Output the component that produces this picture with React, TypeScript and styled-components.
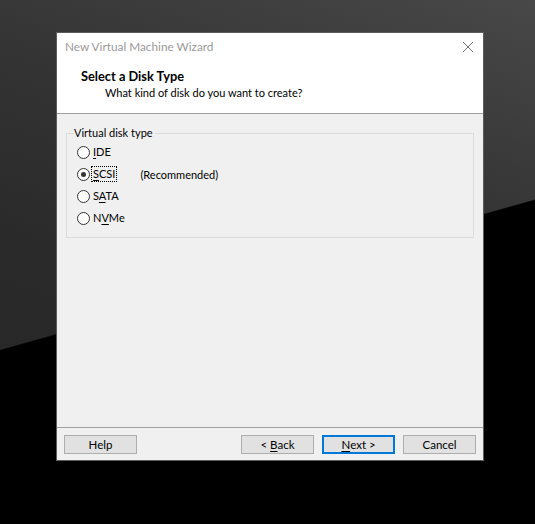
import React from "react";
import styled, { createGlobalStyle } from "styled-components";

const Global = createGlobalStyle`
  html, body { margin: 0; padding: 0; }
  body { font-family: Lato, "Noto Sans", sans-serif; }
`;

const Desktop = styled.div`
  width: 535px;
  height: 524px;
  box-sizing: border-box;
  padding: 32px 0 0 56px;
  overflow: hidden;
  background:
    linear-gradient(164.3deg, transparent 51.8%, #000 52%),
    linear-gradient(200deg, #484848 0%, #333 35%, #2a2a2a 60%, #262626 100%);
`;

const Window = styled.div`
  width: 428px;
  height: 429px;
  box-sizing: border-box;
  border: 1px solid #5c5c5c;
  background: #f0f0f0;
  display: flex;
  flex-direction: column;
  font-size: 11px;
  color: #000;
`;

const Header = styled.div`
  background: #fff;
  height: 81px;
  box-sizing: border-box;
  border-bottom: 1px solid #a0a0a0;
  display: flex;
  flex-direction: column;
`;

const TitleBar = styled.div`
  height: 27px;
  display: flex;
  align-items: center;
  justify-content: space-between;
  padding: 0 9px 0 8px;
`;

const TitleText = styled.span`
  color: #9a9a9a;
  font-size: 11.8px;
`;

const CloseIcon = styled.svg`
  width: 12px;
  height: 12px;
  display: block;
`;

const HeadingBlock = styled.div`
  padding: 8px 0 0 24px;
  display: flex;
  flex-direction: column;
  gap: 1px;
`;

const Heading = styled.div`
  font-weight: bold;
  font-size: 12.8px;
  line-height: 16px;
`;

const SubHeading = styled.div`
  padding-left: 24px;
  line-height: 16px;
`;

const Body = styled.div`
  flex: 1;
  padding: 11px 9px 0 9px;
`;

const GroupBox = styled.fieldset`
  margin: 0;
  padding: 0 0 8px 10px;
  min-width: 0;
  border: 1px solid #dcdcdc;
`;

const Legend = styled.legend`
  margin-left: -3px;
  padding: 0 2px 0 0;
  line-height: 16px;
`;

const RadioRow = styled.div`
  display: flex;
  align-items: center;
  height: 22px;
`;

const RadioCircle = styled.span<{ $checked?: boolean }>`
  width: 11px;
  height: 11px;
  border: 1px solid #333;
  border-radius: 50%;
  background: #fff;
  display: flex;
  align-items: center;
  justify-content: center;
  margin-right: 2px;
  &::after {
    content: "";
    width: 5px;
    height: 5px;
    border-radius: 50%;
    background: ${(p) => (p.$checked ? "#333" : "transparent")};
  }
`;

const RadioLabel = styled.span<{ $focused?: boolean }>`
  line-height: 14px;
  padding: 0 1px;
  outline: ${(p) => (p.$focused ? "1px dotted #000" : "none")};
  outline-offset: 0;
`;

const Note = styled.span`
  margin-left: 24px;
`;

const Footer = styled.div`
  height: 33px;
  border-top: 1px solid #a0a0a0;
  box-sizing: border-box;
  display: flex;
  align-items: flex-start;
  padding: 7px 7px 0 7px;
  gap: 8px;
`;

const Spacer = styled.div`
  flex: 1;
`;

const Button = styled.button<{ $default?: boolean }>`
  width: 73px;
  height: 19px;
  box-sizing: border-box;
  margin: 0;
  padding: 0;
  font-family: inherit;
  font-size: 11.5px;
  color: #000;
  background: #e1e1e1;
  border: ${(p) => (p.$default ? "2px solid #0078d7" : "1px solid #adadad")};
  display: flex;
  align-items: center;
  justify-content: center;
  line-height: 1;
`;

const U = styled.span`
  text-decoration: underline;
  text-underline-offset: 2px;
`;

const options = [
  { key: "ide", pre: "", u: "I", post: "DE" },
  { key: "scsi", pre: "", u: "S", post: "CSI", checked: true, note: "(Recommended)" },
  { key: "sata", pre: "S", u: "A", post: "TA" },
  { key: "nvme", pre: "N", u: "V", post: "Me" },
];

export default function App() {
  return (
    <>
      <Global />
      <Desktop>
        <Window>
          <Header>
            <TitleBar>
              <TitleText>New Virtual Machine Wizard</TitleText>
              <CloseIcon viewBox="0 0 12 12">
                <path d="M1 1 L11 11 M11 1 L1 11" stroke="#707070" strokeWidth="1" fill="none" />
              </CloseIcon>
            </TitleBar>
            <HeadingBlock>
              <Heading>Select a Disk Type</Heading>
              <SubHeading>What kind of disk do you want to create?</SubHeading>
            </HeadingBlock>
          </Header>
          <Body>
            <GroupBox>
              <Legend>Virtual disk type</Legend>
              {options.map((o) => (
                <RadioRow key={o.key}>
                  <RadioCircle $checked={o.checked} />
                  <RadioLabel $focused={o.checked}>
                    {o.pre}
                    <U>{o.u}</U>
                    {o.post}
                  </RadioLabel>
                  {o.note && <Note>{o.note}</Note>}
                </RadioRow>
              ))}
            </GroupBox>
          </Body>
          <Footer>
            <Button>Help</Button>
            <Spacer />
            <Button>
              &lt;&nbsp;<U>B</U>ack
            </Button>
            <Button $default>
              <U>N</U>ext &gt;
            </Button>
            <Button>Cancel</Button>
          </Footer>
        </Window>
      </Desktop>
    </>
  );
}
